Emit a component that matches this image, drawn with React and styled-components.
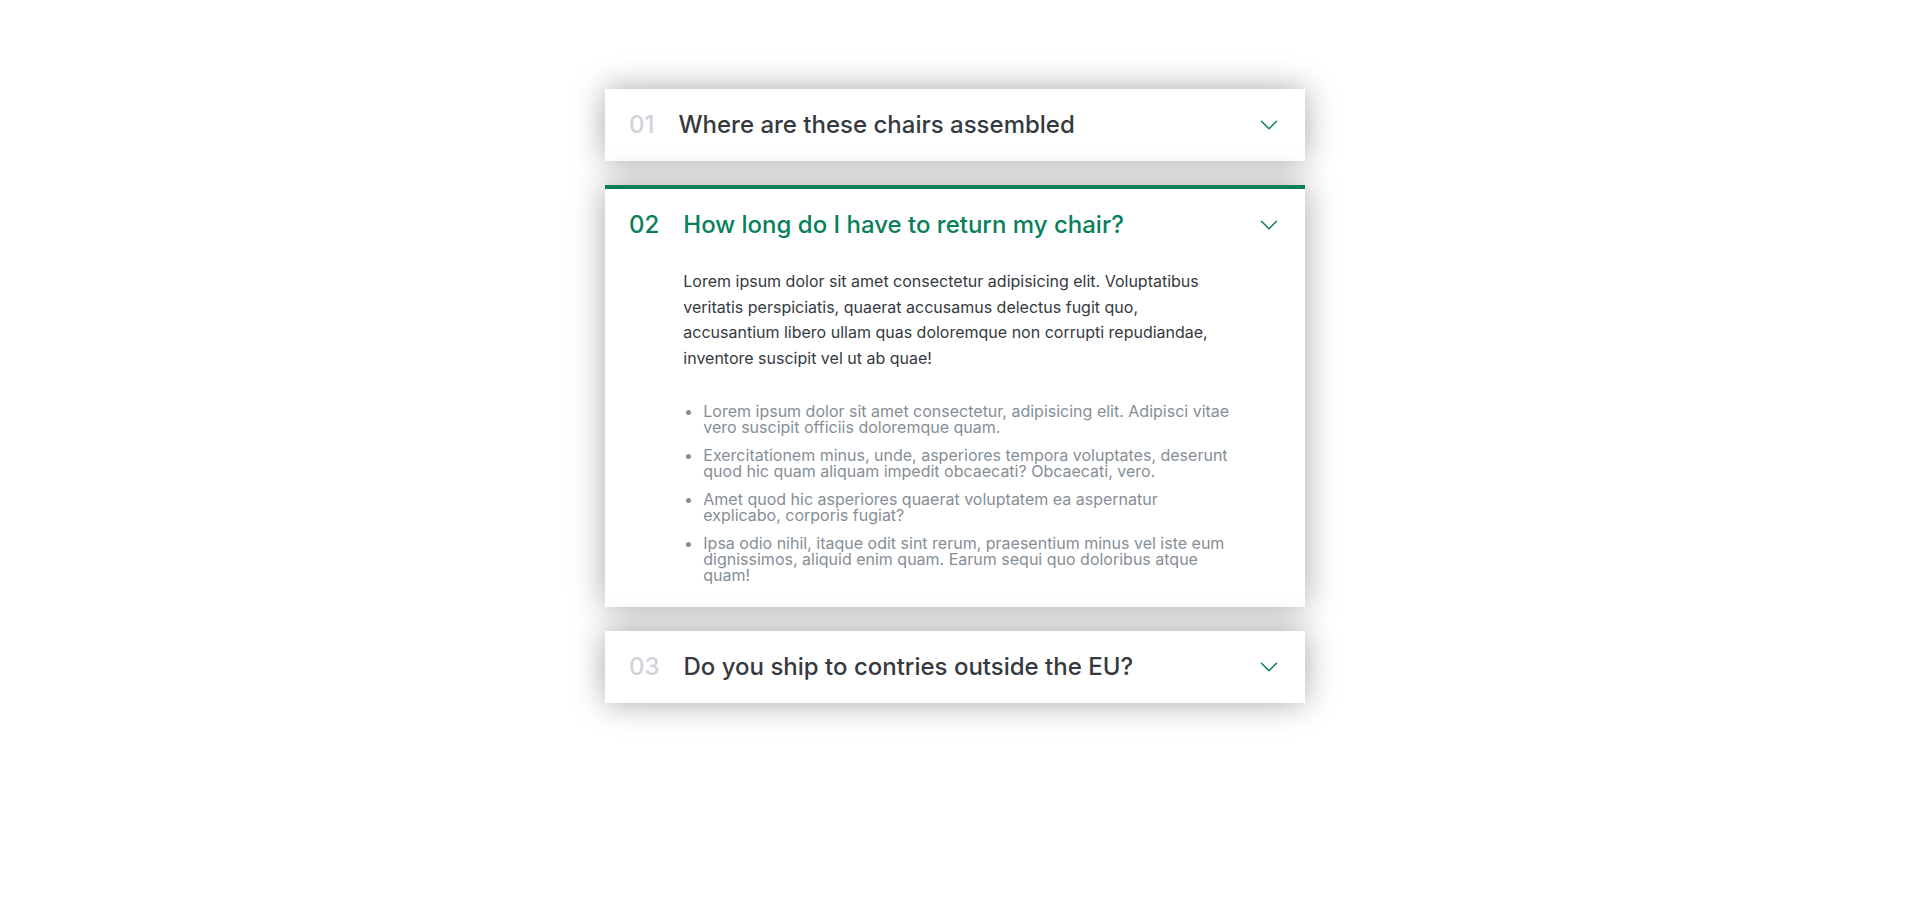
import { useState } from "react";
import styled, { createGlobalStyle } from "styled-components";

const GlobalStyle = createGlobalStyle`
  * {
    margin: 0;
    padding: 0;
    box-sizing: border-box;
  }
  body {
    font-family: Inter, "Noto Sans", sans-serif;
    color: #343a40;
    line-height: 1;
    background: #fff;
  }
`;

const faqs = [
  {
    title: "Where are these chairs assembled",
  },
  {
    title: "How long do I have to return my chair?",
  },
  {
    title: "Do you ship to contries outside the EU?",
  },
];

const ChevronIcon = () => (
  <svg width="24" height="24" viewBox="0 0 24 24" fill="none">
    <path
      d="M19.5 8.25l-7.5 7.5-7.5-7.5"
      stroke="#087f5b"
      strokeWidth="1.5"
      strokeLinecap="round"
      strokeLinejoin="round"
    />
  </svg>
);

const App = () => {
  const [openIndex, setOpenIndex] = useState(1);

  return (
    <Page>
      <GlobalStyle />
      <Accordion>
        {faqs.map((faq, i) => {
          const isOpen = openIndex === i;
          return (
            <Item
              key={faq.title}
              $open={isOpen}
              onClick={() => setOpenIndex(isOpen ? null : i)}
            >
              <Number $open={isOpen}>{String(i + 1).padStart(2, "0")}</Number>
              <Title $open={isOpen}>{faq.title}</Title>
              <ChevronIcon />
              {isOpen && (
                <HiddenBox>
                  <Text>
                    Lorem ipsum dolor sit amet consectetur adipisicing elit.
                    Voluptatibus veritatis perspiciatis, quaerat accusamus
                    delectus fugit quo, accusantium libero ullam quas doloremque
                    non corrupti repudiandae, inventore suscipit vel ut ab quae!
                  </Text>
                  <List>
                    <li>
                      Lorem ipsum dolor sit amet consectetur, adipisicing elit.
                      Adipisci vitae vero suscipit officiis doloremque quam.
                    </li>
                    <li>
                      Exercitationem minus, unde, asperiores tempora voluptates,
                      deserunt quod hic quam aliquam impedit obcaecati?
                      Obcaecati, vero.
                    </li>
                    <li>
                      Amet quod hic asperiores quaerat voluptatem ea aspernatur
                      explicabo, corporis fugiat?
                    </li>
                    <li>
                      Ipsa odio nihil, itaque odit sint rerum, praesentium minus
                      vel iste eum dignissimos, aliquid enim quam. Earum sequi
                      quo doloribus atque quam!
                    </li>
                  </List>
                </HiddenBox>
              )}
            </Item>
          );
        })}
      </Accordion>
    </Page>
  );
};

const Page = styled.div`
  min-height: 100vh;
  padding-top: 89px;
`;

const Accordion = styled.div`
  width: 700px;
  margin: 0 auto;
  display: flex;
  flex-direction: column;
  gap: 24px;
`;

const Item = styled.div`
  display: grid;
  grid-template-columns: auto 1fr auto;
  column-gap: 24px;
  row-gap: 32px;
  align-items: center;
  padding: 24px;
  background: #fff;
  box-shadow: 0 0 32px rgba(0, 0, 0, 0.35);
  border-top: ${({ $open }) => ($open ? "4px solid #087f5b" : "none")};
  cursor: pointer;
`;

const Number = styled.p`
  font-size: 24px;
  font-weight: 500;
  color: ${({ $open }) => ($open ? "#087f5b" : "#ced4da")};
`;

const Title = styled.p`
  font-size: 24px;
  font-weight: 500;
  color: ${({ $open }) => ($open ? "#087f5b" : "#343a40")};
`;

const HiddenBox = styled.div`
  grid-column: 2;
`;

const Text = styled.p`
  font-size: 16px;
  line-height: 1.6;
  margin-bottom: 32px;
`;

const List = styled.ul`
  color: #868e96;
  font-size: 16px;
  padding-left: 20px;
  display: flex;
  flex-direction: column;
  gap: 12px;
`;

export default App;
